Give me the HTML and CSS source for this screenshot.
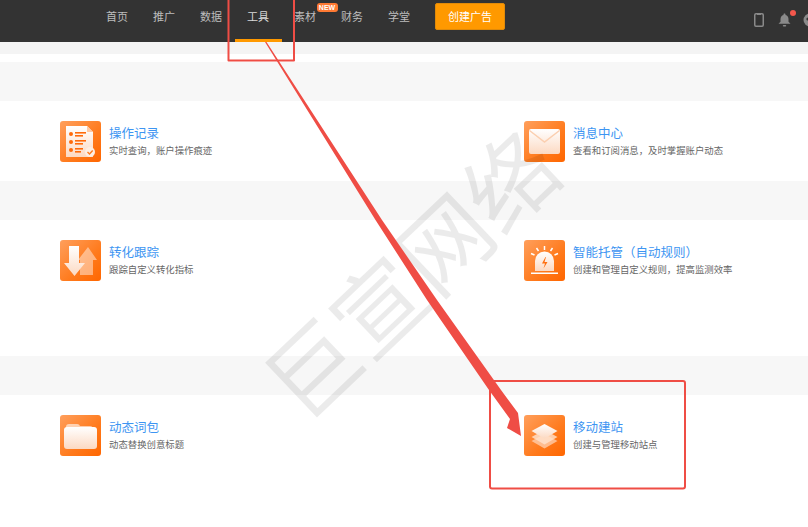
FILE: index.html
```html
<!DOCTYPE html>
<html>
  <head>
    <meta charset="utf-8" />
    <title>工具</title>
    <link rel="stylesheet" href="styles.css">
  </head>
  <body>
    <svg width="0" height="0" class="defs">
      <defs>
        <linearGradient id="tile" x1="0" y1="0" x2="1" y2="1">
          <stop offset="0" stop-color="#ff9f5c" />
          <stop offset="0.6" stop-color="#ff7a1c" />
          <stop offset="1" stop-color="#ff6600" />
        </linearGradient>
        <linearGradient id="paper" x1="0" y1="0" x2="0" y2="1">
          <stop offset="0" stop-color="#ffffff" />
          <stop offset="1" stop-color="#fcd9c2" />
        </linearGradient>
      </defs>
    </svg>

    <header class="topbar">
      <nav class="nav">
        <a class="nav-item">首页</a>
        <a class="nav-item">推广</a>
        <a class="nav-item">数据</a>
        <a class="nav-item current">工具</a>
        <a class="nav-item">素材<span class="new-badge">NEW</span></a>
        <a class="nav-item">财务</a>
        <a class="nav-item">学堂</a>
      </nav>
      <a class="create-btn">创建广告</a>
      <div class="top-icons">
        <svg class="phone" width="10" height="14" viewBox="0 0 10 14">
          <rect x="0.750" y="0.750" width="8.500" height="12.500" rx="1.200" fill="none" stroke="#8a8a8a" stroke-width="1.500" />
          <path d="M3 0.800h4v1.200H3z" fill="#8a8a8a" />
        </svg>
        <span class="bell-wrap">
          <svg width="13" height="14" viewBox="0 0 13 14">
            <path d="M6.500 0.500c.6 0 1 .4 1 1v.5c2 .5 3 2.200 3 4.200v2.600l2 2H0.500l2-2V6.200c0-2 1-3.700 3-4.200v-.5c0-.6.4-1 1-1z" fill="#8a8a8a" />
            <rect x="4.800" y="12" width="3.400" height="1.600" rx="0.800" fill="#8a8a8a" />
          </svg>
          <span class="dot"></span>
        </span>
        <svg class="help" width="14" height="14" viewBox="0 0 14 14">
          <circle cx="7" cy="7" r="6.500" fill="#8a8a8a" />
          <circle cx="5" cy="6" r="1.600" fill="#333" />
        </svg>
      </div>
    </header>

    <div class="strip"></div>
    <div class="band"></div>

    <section class="tool-row row-a">
      <div class="tool">
        <svg class="tool-icon" viewBox="0 0 41 41">
          <rect width="41" height="41" rx="3" fill="url(#tile)" />
          <path d="M6 5h21l6 6v25H6z" fill="url(#paper)" />
          <path d="M27 5l6 6h-6z" fill="#ffc9a3" />
          <g fill="#ff6a0a">
            <circle cx="11" cy="13" r="2" />
            <circle cx="11" cy="21" r="2" />
            <circle cx="11" cy="29" r="2" />
            <rect x="15" y="11" width="11" height="1.600" />
            <rect x="15" y="14" width="8" height="1.600" />
            <rect x="15" y="19" width="11" height="1.600" />
            <rect x="15" y="22" width="8" height="1.600" />
            <rect x="15" y="27" width="8" height="1.600" />
            <rect x="15" y="30" width="6" height="1.600" />
          </g>
          <circle cx="30" cy="31" r="5" fill="#fdeee3" />
          <path d="M27.500 31l2 2 3.200-3.400" fill="none" stroke="#ff7a1c" stroke-width="1.400" />
        </svg>
        <div class="tool-text">
          <div class="tool-name">操作记录</div>
          <div class="tool-desc">实时查询，账户操作痕迹</div>
        </div>
      </div>
      <div class="tool">
        <svg class="tool-icon" viewBox="0 0 41 41">
          <rect width="41" height="41" rx="3" fill="url(#tile)" />
          <rect x="5" y="8" width="31" height="25" rx="2" fill="url(#paper)" />
          <path d="M5.500 9.500L20.500 21l15-11.500" fill="none" stroke="#fbcfb0" stroke-width="1.500" />
        </svg>
        <div class="tool-text">
          <div class="tool-name">消息中心</div>
          <div class="tool-desc">查看和订阅消息，及时掌握账户动态</div>
        </div>
      </div>
    </section>

    <div class="band"></div>

    <section class="tool-row row-b">
      <div class="tool">
        <svg class="tool-icon" viewBox="0 0 41 41">
          <rect width="41" height="41" rx="3" fill="url(#tile)" />
          <path d="M20 35V20h-2l10-13 9 13h-4v15z" fill="#ffffff" fill-opacity="0.45" />
          <path d="M9 6h10v17h6L14.500 36 4 23h5z" fill="url(#paper)" />
        </svg>
        <div class="tool-text">
          <div class="tool-name">转化跟踪</div>
          <div class="tool-desc">跟踪自定义转化指标</div>
        </div>
      </div>
      <div class="tool">
        <svg class="tool-icon" viewBox="0 0 41 41">
          <rect width="41" height="41" rx="3" fill="url(#tile)" />
          <path d="M11 31V21a9.500 9.500 0 0 1 19 0v10z" fill="url(#paper)" />
          <path d="M21.500 17l-3.500 6.500h3l-1.500 5 4-6.500h-3l1.500-5z" fill="#ff6f10" />
          <rect x="7" y="32.500" width="27" height="1.500" fill="#fff" />
          <g stroke="#fff" stroke-width="1.500" fill="none">
            <path d="M20.500 6v4" />
            <path d="M12.500 8l2 3" />
            <path d="M28.500 8l-2 3" />
            <path d="M7 13.500l3.500 1.500" />
            <path d="M34 13.500l-3.500 1.500" />
          </g>
        </svg>
        <div class="tool-text">
          <div class="tool-name">智能托管（自动规则）</div>
          <div class="tool-desc">创建和管理自定义规则，提高监测效率</div>
        </div>
      </div>
    </section>

    <div class="band"></div>

    <section class="tool-row row-c">
      <div class="tool">
        <svg class="tool-icon" viewBox="0 0 41 41">
          <rect width="41" height="41" rx="3" fill="url(#tile)" />
          <path d="M6 12a3 3 0 0 1 3-3h8a3 3 0 0 1 3 2h10a3 3 0 0 1 3 2v2H6z" fill="#fff" fill-opacity="0.6" />
          <rect x="4" y="12" width="33" height="22" rx="3" fill="url(#paper)" />
        </svg>
        <div class="tool-text">
          <div class="tool-name">动态词包</div>
          <div class="tool-desc">动态替换创意标题</div>
        </div>
      </div>
      <div class="tool">
        <svg class="tool-icon" viewBox="0 0 41 41">
          <rect width="41" height="41" rx="3" fill="url(#tile)" />
          <path d="M20.500 19l13 7-13 7.500-13-7.500z" fill="#ffd9bf" fill-opacity="0.7" />
          <path d="M20.500 15l13 7-13 7.500-13-7.500z" fill="#ffe3cf" fill-opacity="0.8" />
          <path d="M20.500 9l13 7-13 7.500-13-7.500z" fill="url(#paper)" />
        </svg>
        <div class="tool-text">
          <div class="tool-name">移动建站</div>
          <div class="tool-desc">创建与管理移动站点</div>
        </div>
      </div>
    </section>

    <div class="watermark">巨宣网络</div>

    <svg class="marks" width="808" height="527" viewBox="0 0 808 527">
      <path d="M228.500 -4V60.500H294V-4" fill="none" stroke="#ef4d45" stroke-width="2" stroke-linejoin="round" />
      <rect x="490" y="381" width="195" height="107.500" rx="2" fill="none" stroke="#ef4d45" stroke-width="2" />
      <path d="M265 42H266.500L382 220L437 300L501 390L518 413L521 436L507 428L510 419L489 390L427 300L375.500 220Z" fill="#ef4d45" />
    </svg>
  </body>
</html>
```

FILE: styles.css
```css
* {
  box-sizing: border-box;
}
html, body {
  margin: 0;
  height: 527px;
  overflow: hidden;
}
body {
  position: relative;
  background-color: white;
  font-family: "Liberation Sans", "Noto Sans CJK SC", sans-serif;
}
.defs {
  position: absolute;
}
.topbar {
  display: flex;
  align-items: flex-start;
  height: 42px;
  padding-left: 93.500px;
  background-color: #333;
}
.nav {
  display: flex;
  flex: none;
}
.nav-item {
  position: relative;
  width: 47px;
  height: 42px;
  line-height: 34px;
  text-align: center;
  font-size: 11px;
  color: #bdbdbd;
}
.nav-item.current {
  color: #d8d8d8;
  border-bottom: 3px solid #f90;
}
.new-badge {
  position: absolute;
  top: 3px;
  left: 35px;
  width: 21px;
  height: 9px;
  line-height: 9px;
  border-radius: 3px;
  background-color: #ff7a33;
  color: white;
  font-size: 7px;
  font-weight: bold;
}
.create-btn {
  flex: none;
  width: 70px;
  height: 27px;
  margin-top: 3px;
  margin-left: 12.500px;
  line-height: 26px;
  text-align: center;
  font-size: 11px;
  color: white;
  background-color: #f90;
  border: 1px solid #e08a0a;
  border-radius: 2px;
}
.top-icons {
  display: flex;
  flex: none;
  align-items: center;
  gap: 14px;
  height: 14px;
  margin-top: 13px;
  margin-left: 249px;
}
.bell-wrap {
  position: relative;
  display: flex;
}
.dot {
  position: absolute;
  top: -3px;
  left: 12px;
  width: 6px;
  height: 6px;
  border-radius: 50%;
  background-color: #f4574c;
}
.help {
  flex: none;
  margin-left: -2px;
}
.strip {
  height: 12px;
  margin-bottom: 8px;
  background-color: #f4f4f4;
}
.band {
  height: 39px;
  background-color: #f7f7f7;
}
.tool-row {
  display: grid;
  grid-template-columns: 464px 1fr;
  padding-top: 20px;
  padding-left: 60px;
}
.row-a {
  height: 80px;
}
.row-b {
  height: 136px;
}
.row-c {
  height: 132px;
}
.tool {
  display: flex;
  gap: 8px;
}
.tool-icon {
  flex: none;
  width: 41px;
  height: 41px;
}
.tool-text {
  padding-top: 5px;
}
.tool-name {
  height: 17px;
  line-height: 17px;
  font-size: 12.500px;
  color: #3d95f2;
}
.tool-desc {
  margin-top: 1px;
  line-height: 14px;
  font-size: 9.400px;
  color: #666;
}
.watermark {
  position: absolute;
  left: 218px;
  top: 216px;
  width: 380px;
  line-height: 110px;
  text-align: center;
  white-space: nowrap;
  font-size: 91px;
  color: rgba(0, 0, 0, 0.08);
  font-family: "Noto Sans CJK SC", sans-serif;
  transform: rotate(-43.500deg);
  pointer-events: none;
}
.marks {
  position: absolute;
  left: 0;
  top: 0;
  pointer-events: none;
}
```
